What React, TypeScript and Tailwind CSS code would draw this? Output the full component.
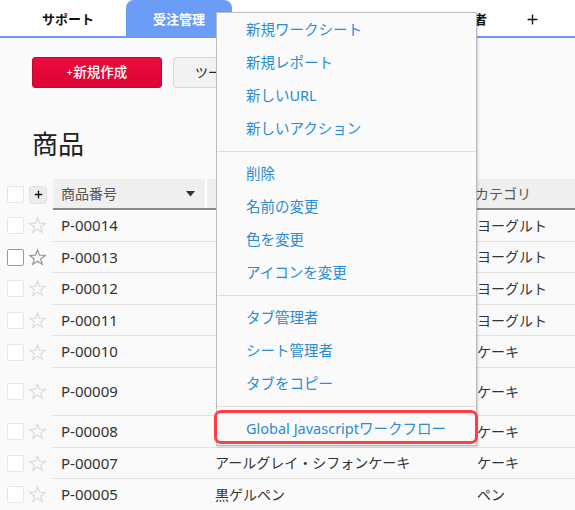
import { Plus } from 'lucide-react';

type Row = { code: string; name: string; cat: string; tall?: boolean; hover?: boolean };

// names of the upper rows sit under the open menu
const rows: Row[] = [
  { code: 'P-00014', name: '', cat: 'ヨーグルト' },
  { code: 'P-00013', name: '', cat: 'ヨーグルト', hover: true },
  { code: 'P-00012', name: '', cat: 'ヨーグルト' },
  { code: 'P-00011', name: '', cat: 'ヨーグルト' },
  { code: 'P-00010', name: '', cat: 'ケーキ' },
  { code: 'P-00009', name: '', cat: 'ケーキ', tall: true },
  { code: 'P-00008', name: '', cat: 'ケーキ' },
  { code: 'P-00007', name: 'アールグレイ・シフォンケーキ', cat: 'ケーキ' },
  { code: 'P-00005', name: '黒ゲルペン', cat: 'ペン' },
];

const menuGroups = [
  ['新規ワークシート', '新規レポート', '新しいURL', '新しいアクション'],
  ['削除', '名前の変更', '色を変更', 'アイコンを変更'],
  ['タブ管理者', 'シート管理者', 'タブをコピー'],
  ['Global Javascriptワークフロー'],
];

function StarIcon({ dark }: { dark?: boolean }) {
  return (
    <svg width="19" height="19" viewBox="0 0 24 24" fill="none">
      <polygon
        points="12,2.5 14.6,9.1 21.6,9.4 16.1,13.8 18,20.6 12,16.7 6,20.6 7.9,13.8 2.4,9.4 9.4,9.1"
        stroke={dark ? '#9a9a9a' : '#dcdcdc'}
        strokeWidth="1.6"
        strokeLinejoin="miter"
      />
    </svg>
  );
}

function Check({ dark }: { dark?: boolean }) {
  return (
    <div
      className={`w-[17px] h-[17px] rounded-[2px] bg-white border-[1.5px] ${dark ? 'border-[#9a9a9a]' : 'border-[#e6e6e6]'}`}
    />
  );
}

export default function App() {
  return (
    <div
      className="relative w-[575px] h-[510px] overflow-hidden bg-[#fafafa] text-[#333]"
      style={{ fontFamily: '"Noto Sans", "Noto Sans CJK JP", sans-serif' }}
    >
      {/* tab bar */}
      <div className="h-[38px] bg-white border-b-2 border-[#6b9cf6] flex items-end">
        <div className="h-[36px] pt-[3px] pl-[42px] pr-[32px] flex items-center text-[13px] font-bold text-[#111]">
          サポート
        </div>
        <div className="h-[36px] pt-[3px] w-[106px] rounded-t-[8px] bg-[#6b9cf6] flex items-center justify-center text-[13px] font-bold text-white">
          受注管理
        </div>
        <div className="h-[36px] pt-[3px] w-[255px] flex items-center justify-end text-[13px] font-bold text-[#111]">
          担当者
        </div>
        <div className="h-[36px] pt-[3px] ml-[38px] flex items-center">
          <Plus size={15} strokeWidth={2.2} className="text-[#111]" />
        </div>
      </div>

      {/* toolbar */}
      <div className="flex pt-[19px] pl-[32px]">
        <button className="w-[130px] h-[31px] rounded-[3px] border border-[#b80d2f] bg-gradient-to-b from-[#ee0a3d] to-[#dc0536] text-white text-[13.5px] font-medium flex items-center justify-center">
          <span className="text-[10px] mr-[1px]">+</span>新規作成
        </button>
        <button className="ml-[11px] h-[31px] px-[21px] rounded-[3px] border border-[#d9d9d9] bg-[#f2f2f2] text-[13px] text-[#222]">
          ツール
        </button>
      </div>

      {/* title */}
      <div className="mt-[38px] mb-[17px] pl-[32px] h-[36px] leading-[36px] text-[26px] text-[#222]">商品</div>

      {/* table header */}
      <div className="flex h-[31px]">
        <div className="w-[53px] flex items-center pl-[7px] gap-[5px]">
          <Check />
          <div className="w-[18px] h-[18px] rounded-[3px] bg-[#ececec] border border-[#e2e2e2] flex items-center justify-center">
            <Plus size={11} strokeWidth={3} className="text-[#111]" />
          </div>
        </div>
        <div className="flex-1 flex bg-[#efefef] border-b-2 border-[#8a8a8a] text-[14px] text-[#555]">
          <div className="w-[154px] pl-2 pr-[10px] flex items-center justify-between border-r-2 border-white">
            <span>商品番号</span>
            <svg width="9" height="6" viewBox="0 0 9 6">
              <polygon points="0,0 9,0 4.5,5.5" fill="#333" />
            </svg>
          </div>
          <div className="w-[260px] pl-2 flex items-center" />
          <div className="flex-1 pl-2 flex items-center">カテゴリ</div>
        </div>
      </div>

      {/* rows */}
      {rows.map((r) => (
        <div key={r.code} className={`flex ${r.tall ? 'h-[48px]' : 'h-[31.6px]'}`}>
          <div className="w-[53px] flex items-center pl-[7px] gap-[4px]">
            <Check dark={r.hover} />
            <StarIcon dark={r.hover} />
          </div>
          <div className="flex-1 flex border-b border-[#e2e2e2] text-[14px] text-[#333]">
            <div className="w-[154px] pl-2 flex items-center text-[15px]">{r.code}</div>
            <div className="w-[262px] pl-2 flex items-center whitespace-nowrap overflow-hidden">{r.name}</div>
            <div className="flex-1 pl-2 flex items-center whitespace-nowrap">{r.cat}</div>
          </div>
        </div>
      ))}

      {/* dropdown menu */}
      <div className="absolute left-[216px] top-[12px] w-[261px] bg-[#fafafa] border border-[#bdbdbd] shadow-[1px_1px_2px_rgba(0,0,0,0.18)]">
        {menuGroups.map((g, gi) => (
          <div key={gi}>
            {gi > 0 && <div className="mt-[6px] mb-[5px] h-px bg-[#dedede]" />}
            {g.map((item) => (
              <div key={item} className="h-[33px] pl-[29px] flex items-center text-[14.5px] text-[#2b8bd5] whitespace-nowrap">
                {item}
              </div>
            ))}
          </div>
        ))}
      </div>

      {/* highlight */}
      <div className="absolute left-[214px] top-[410px] w-[264px] h-[34px] rounded-[7px] border-[3px] border-[#ff3f43]" />
    </div>
  );
}
